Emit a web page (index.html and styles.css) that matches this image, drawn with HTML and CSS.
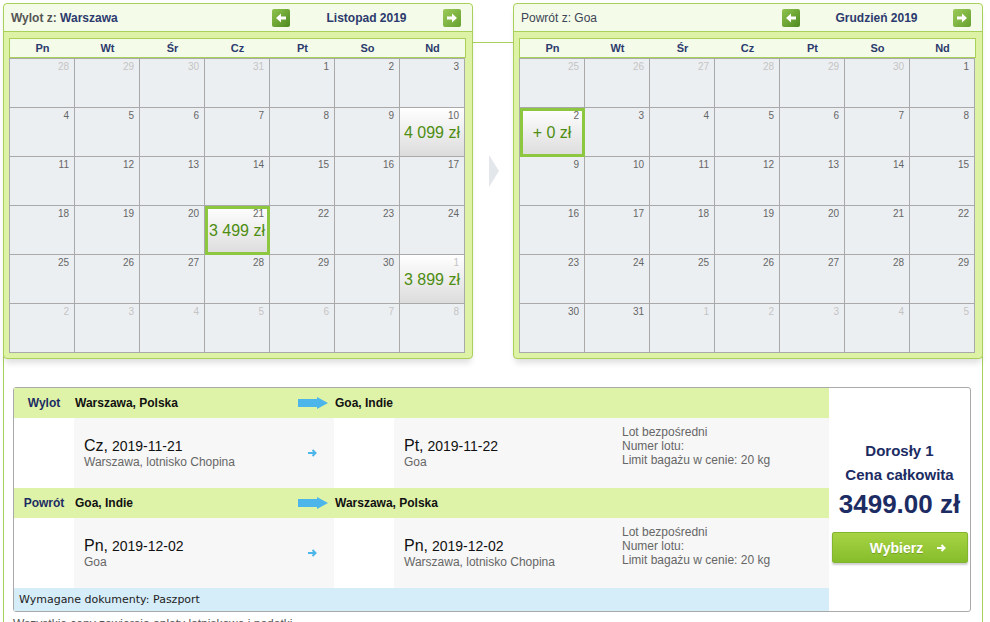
FILE: index.html
```html
<!DOCTYPE html>
<html lang="pl">
<head>
  <meta charset="UTF-8">
  <meta name="viewport" content="width=device-width, initial-scale=1.0">
  <title>Wybór lotu</title>
  <link rel="stylesheet" href="styles.css">
</head>
<body>
  <div class="page">
    <div class="trip">
      <div class="calendars">

        <!-- wylot -->
        <div class="cal">
          <div class="cal-head">
            <div class="cal-title">Wylot z: <b>Warszawa</b></div>
            <div class="cal-nav">
              <a class="nav-btn prev" href="#"><svg width="18" height="18" viewBox="0 0 18 18"><polygon points="4,9 9,4.5 9,7.5 14,7.5 14,10.5 9,10.5 9,13.5" fill="#fff"/></svg></a>
              <span class="month">Listopad 2019</span>
              <a class="nav-btn next" href="#"><svg width="18" height="18" viewBox="0 0 18 18"><polygon points="14,9 9,4.5 9,7.5 4,7.5 4,10.5 9,10.5 9,13.5" fill="#fff"/></svg></a>
            </div>
          </div>
          <div class="cal-body">
            <div class="cal-days">
              <span>Pn</span><span>Wt</span><span>Śr</span><span>Cz</span><span>Pt</span><span>So</span><span>Nd</span>
            </div>
            <div class="cal-grid">
              <div class="day off">28</div><div class="day off">29</div><div class="day off">30</div><div class="day off">31</div><div class="day">1</div><div class="day">2</div><div class="day">3</div>
              <div class="day">4</div><div class="day">5</div><div class="day">6</div><div class="day">7</div><div class="day">8</div><div class="day">9</div><div class="day fare">10<span>4 099 zł</span></div>
              <div class="day">11</div><div class="day">12</div><div class="day">13</div><div class="day">14</div><div class="day">15</div><div class="day">16</div><div class="day">17</div>
              <div class="day">18</div><div class="day">19</div><div class="day">20</div><div class="day fare picked">21<span>3 499 zł</span></div><div class="day">22</div><div class="day">23</div><div class="day">24</div>
              <div class="day">25</div><div class="day">26</div><div class="day">27</div><div class="day">28</div><div class="day">29</div><div class="day">30</div><div class="day fare off">1<span>3 899 zł</span></div>
              <div class="day off">2</div><div class="day off">3</div><div class="day off">4</div><div class="day off">5</div><div class="day off">6</div><div class="day off">7</div><div class="day off">8</div>
            </div>
          </div>
        </div>

        <div class="cal-gap"><i class="chevron"></i></div>

        <!-- powrot -->
        <div class="cal">
          <div class="cal-head">
            <div class="cal-title back">Powrót z: Goa</div>
            <div class="cal-nav">
              <a class="nav-btn prev" href="#"><svg width="18" height="18" viewBox="0 0 18 18"><polygon points="4,9 9,4.5 9,7.5 14,7.5 14,10.5 9,10.5 9,13.5" fill="#fff"/></svg></a>
              <span class="month">Grudzień 2019</span>
              <a class="nav-btn next" href="#"><svg width="18" height="18" viewBox="0 0 18 18"><polygon points="14,9 9,4.5 9,7.5 4,7.5 4,10.5 9,10.5 9,13.5" fill="#fff"/></svg></a>
            </div>
          </div>
          <div class="cal-body">
            <div class="cal-days">
              <span>Pn</span><span>Wt</span><span>Śr</span><span>Cz</span><span>Pt</span><span>So</span><span>Nd</span>
            </div>
            <div class="cal-grid">
              <div class="day off">25</div><div class="day off">26</div><div class="day off">27</div><div class="day off">28</div><div class="day off">29</div><div class="day off">30</div><div class="day">1</div>
              <div class="day fare picked">2<span>+ 0 zł</span></div><div class="day">3</div><div class="day">4</div><div class="day">5</div><div class="day">6</div><div class="day">7</div><div class="day">8</div>
              <div class="day">9</div><div class="day">10</div><div class="day">11</div><div class="day">12</div><div class="day">13</div><div class="day">14</div><div class="day">15</div>
              <div class="day">16</div><div class="day">17</div><div class="day">18</div><div class="day">19</div><div class="day">20</div><div class="day">21</div><div class="day">22</div>
              <div class="day">23</div><div class="day">24</div><div class="day">25</div><div class="day">26</div><div class="day">27</div><div class="day">28</div><div class="day">29</div>
              <div class="day">30</div><div class="day">31</div><div class="day off">1</div><div class="day off">2</div><div class="day off">3</div><div class="day off">4</div><div class="day off">5</div>
            </div>
          </div>
        </div>
      </div>

      <!-- podsumowanie -->
      <div class="summary">
        <div class="legs">
          <div class="route">
            <div class="route-label">Wylot</div>
            <div class="route-from">Warszawa, Polska
              <svg class="big-arrow" width="30" height="12" viewBox="0 0 30 12"><polygon points="0,2 19,2 19,0 30,6 19,12 19,10 0,10" fill="#4cb6ea"/></svg>
            </div>
            <div class="route-to">Goa, Indie</div>
          </div>
          <div class="leg">
            <div class="blank"></div>
            <div class="stop-cell">
              <div class="stop">
                <div class="when"><span class="wd">Cz,</span> 2019-11-21</div>
                <div class="where">Warszawa, lotnisko Chopina</div>
              </div>
              <svg class="small-arrow" width="9" height="8" viewBox="0 0 9 8"><path d="M0 4H7.5M4.5 1L7.5 4L4.5 7" stroke="#4cb6ea" stroke-width="2" fill="none"/></svg>
            </div>
            <div class="blank"></div>
            <div class="stop-cell">
              <div class="stop">
                <div class="when"><span class="wd">Pt,</span> 2019-11-22</div>
                <div class="where">Goa</div>
              </div>
            </div>
            <div class="info">Lot bezpośredni<br>Numer lotu:<br>Limit bagażu w cenie: 20 kg</div>
          </div>
          <div class="route">
            <div class="route-label">Powrót</div>
            <div class="route-from">Goa, Indie
              <svg class="big-arrow" width="30" height="12" viewBox="0 0 30 12"><polygon points="0,2 19,2 19,0 30,6 19,12 19,10 0,10" fill="#4cb6ea"/></svg>
            </div>
            <div class="route-to">Warszawa, Polska</div>
          </div>
          <div class="leg">
            <div class="blank"></div>
            <div class="stop-cell">
              <div class="stop">
                <div class="when"><span class="wd">Pn,</span> 2019-12-02</div>
                <div class="where">Goa</div>
              </div>
              <svg class="small-arrow" width="9" height="8" viewBox="0 0 9 8"><path d="M0 4H7.5M4.5 1L7.5 4L4.5 7" stroke="#4cb6ea" stroke-width="2" fill="none"/></svg>
            </div>
            <div class="blank"></div>
            <div class="stop-cell">
              <div class="stop">
                <div class="when"><span class="wd">Pn,</span> 2019-12-02</div>
                <div class="where">Warszawa, lotnisko Chopina</div>
              </div>
            </div>
            <div class="info">Lot bezpośredni<br>Numer lotu:<br>Limit bagażu w cenie: 20 kg</div>
          </div>
          <div class="docs">Wymagane dokumenty: Paszport</div>
        </div>
        <div class="total">
          <div class="pax">Dorosły 1</div>
          <div class="pax">Cena całkowita</div>
          <div class="amount">3499.00 zł</div>
          <a class="btn-select" href="#">Wybierz
            <svg width="9" height="8" viewBox="0 0 9 8"><path d="M0 4H7.5M4.5 1L7.5 4L4.5 7" stroke="#fff" stroke-width="2" fill="none"/></svg>
          </a>
        </div>
      </div>
      <p class="note">Wszystkie ceny zawierają opłaty lotniskowe i podatki.</p>
    </div>
  </div>
</body>
</html>
```

FILE: styles.css
```css
:root {
  --green: #a8d05b;
  --green-bg: #def2a6;
  --green-light: #f4fbe8;
  --navy: #1c2c63;
  --grid: #a9a9a9;
}
* { box-sizing: border-box; }
body {
  margin: 0;
  font-family: "Liberation Sans", Arial, sans-serif;
  color: #333;
  background: #fff;
}
a { text-decoration: none; }
.page {
  padding: 3px 0 0 3px;
}
.trip {
  width: 980px;
  margin-top: 39px;
  border: 1px solid var(--green);
  border-bottom: 0;
  padding-bottom: 40px;
}

/* kalendarze */
.calendars {
  display: flex;
  margin: -40px -1px 0;
}
.cal {
  width: 470px;
  border: 1px solid var(--green);
  border-radius: 4px;
  background: var(--green-bg);
  box-shadow: 0 6px 6px -2px rgba(0,0,0,0.13);
}
.cal-gap {
  width: 40px;
  padding: 152px 0 0 16px;
}
.chevron {
  display: block;
  width: 0;
  height: 0;
  border-left: 10px solid #e3e6ea;
  border-top: 16px solid transparent;
  border-bottom: 16px solid transparent;
}
.cal-head {
  display: flex;
  align-items: center;
  height: 28px;
  padding: 0 11px 0 7px;
  background: var(--green-light);
  border-bottom: 1px solid var(--green);
  border-radius: 4px 4px 0 0;
  font-size: 12px;
}
.cal-title {
  font-weight: bold;
  color: #555;
}
.cal-title b { color: #2c3a6e; }
.cal-title.back {
  font-weight: normal;
  color: #3d4456;
}
.cal-nav {
  display: flex;
  align-items: center;
  margin-left: auto;
}
.month {
  width: 153px;
  text-align: center;
  font-weight: bold;
  color: #2c3a6e;
}
.nav-btn {
  display: block;
  width: 18px;
  height: 18px;
  border-radius: 2px;
  background: linear-gradient(135deg, #8fc34d, #4e8a20);
}
.nav-btn.next {
  background: linear-gradient(135deg, #9ccb5a, #65a02f);
}
.nav-btn svg { display: block; }
.cal-body {
  padding: 6px 6px 5px 5px;
}
.cal-days {
  display: grid;
  grid-template-columns: repeat(7, 1fr);
  height: 20px;
  border: 1px solid var(--green);
  background: var(--green-light);
  font-size: 11px;
  line-height: 18px;
  font-weight: bold;
  color: #2c3a6e;
  text-align: center;
}
.cal-grid {
  display: grid;
  grid-template-columns: repeat(7, 65px);
  grid-auto-rows: 49px;
  width: 456px;
  border-left: 1px solid var(--grid);
  border-top: 1px solid var(--grid);
}
.day {
  border-right: 1px solid var(--grid);
  border-bottom: 1px solid var(--grid);
  background: #eceff2;
  padding: 2px 5px 0;
  text-align: right;
  font-size: 10px;
  line-height: 12px;
  color: #666;
}
.day.off { color: #c4c4c4; }
.day.fare {
  background: linear-gradient(#fff, #dcdcdc);
  cursor: pointer;
}
.day span {
  display: block;
  margin: 2px -5px 0;
  text-align: center;
  font-size: 16px;
  line-height: 18px;
  color: #4e8d12;
}
.day.picked {
  outline: 3px solid #8dc63f;
  outline-offset: -3px;
}

/* podsumowanie */
.summary {
  display: flex;
  margin: 28px 11px 0 9px;
  border: 1px solid var(--grid);
  border-radius: 3px;
}
.legs { width: 815px; }
.route, .leg {
  display: grid;
  grid-template-columns: 60px 260px 60px 228px 1fr;
}
.route {
  height: 30px;
  align-items: center;
  background: #dff3a8;
  font-size: 12px;
  font-weight: bold;
  color: #111;
}
.route-label {
  text-align: center;
  color: var(--navy);
}
.route-from {
  display: flex;
  align-items: center;
  padding-left: 1px;
}
.big-arrow { margin: 0 6px 0 auto; }
.route-to {
  grid-column: 3 / -1;
  padding-left: 1px;
}
.leg {
  height: 70px;
  background: #f7f7f7;
}
.blank { background: #fff; }
.stop-cell {
  display: flex;
  align-items: center;
  padding-left: 10px;
}
.stop { flex: 1; }
.small-arrow { margin-right: 17px; }
.when {
  font-size: 14px;
  line-height: 18px;
  color: #111;
}
.when .wd { font-size: 16px; }
.where {
  font-size: 12px;
  line-height: 14px;
  color: #666;
}
.info {
  padding-top: 7px;
  font-size: 12px;
  line-height: 14px;
  color: #666;
}
.docs {
  height: 23px;
  padding-left: 5px;
  background: #d5ecf9;
  font-family: "DejaVu Sans", Verdana, sans-serif;
  font-size: 11px;
  line-height: 23px;
  color: #222;
}
.total {
  flex: 1;
  padding-top: 51px;
  text-align: center;
  color: var(--navy);
}
.pax {
  font-size: 15px;
  line-height: 24px;
  font-weight: bold;
}
.amount {
  font-size: 26px;
  line-height: 34px;
  font-weight: bold;
}
.btn-select {
  display: flex;
  align-items: center;
  justify-content: center;
  gap: 14px;
  width: 136px;
  height: 31px;
  margin: 11px auto 0;
  padding-left: 17px;
  border: 1px solid #84b52e;
  border-radius: 2px;
  background: linear-gradient(#a7d343, #86bd2b);
  box-shadow: 0 2px 2px rgba(0,0,0,0.2);
  color: #fff;
  font-size: 14px;
  font-weight: bold;
  text-shadow: 0 1px 0 rgba(0,0,0,0.2);
}
.note {
  margin: 5px 0 0 9px;
  font-size: 12px;
  color: #555;
}
```
